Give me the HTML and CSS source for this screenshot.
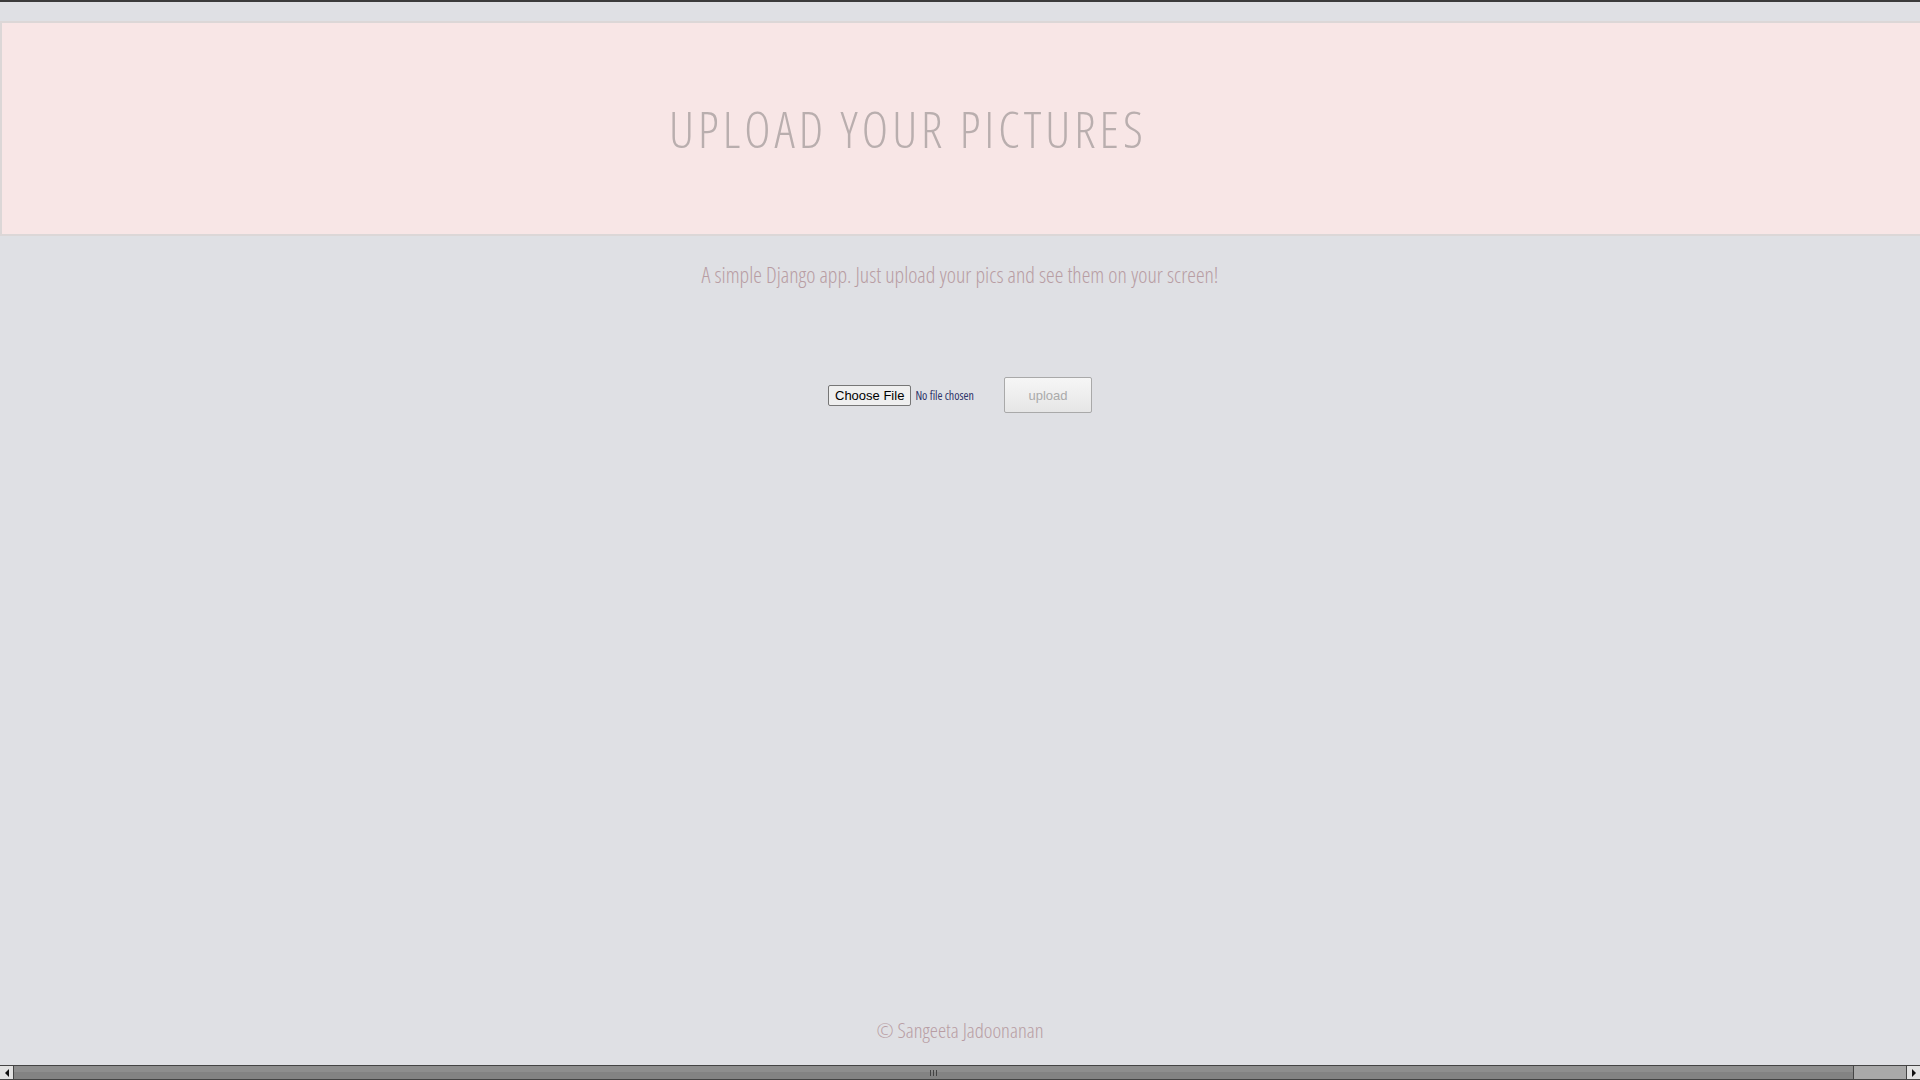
FILE: index.html
```html
<!DOCTYPE html>
<html lang="en">
<head>
<meta charset="utf-8">
<title>Upload your pictures</title>
<link rel="stylesheet" href="styles.css">
</head>
<body>
<div class="topline"></div>
<header class="banner">
  <h1 class="title">UPLOAD YOUR PICTURES</h1>
</header>
<main class="main">
  <p class="lead">A simple Django app. Just upload your pics and see them on your screen!</p>
  <form class="upload-form">
    <input class="file-input" type="file" name="pic">
    <button class="upload-btn" type="button">upload</button>
  </form>
</main>
<footer class="footer">© Sangeeta Jadoonanan</footer>
<div class="hscroll">
  <div class="sb-btn sb-left"><span class="tri-left"></span></div>
  <div class="sb-thumb"><span class="grip"></span><span class="grip"></span><span class="grip"></span></div>
  <div class="sb-track"></div>
  <div class="sb-btn sb-right"><span class="tri-right"></span></div>
</div>
</body>
</html>
```
FILE: styles.css
```css
html, body {
  margin: 0;
  padding: 0;
}
body {
  background: #dfe0e4;
  height: 1080px;
  overflow: hidden;
  display: flex;
  flex-direction: column;
  font-family: "Open Sans", "DejaVu Sans", sans-serif;
  font-weight: 300;
  font-stretch: 75%;
}
.topline {
  height: 2px;
  background: #3b3b3b;
}
.banner {
  margin-top: 19px;
  height: 211px;
  background: #f8e6e6;
  border: 2px solid #dcd7d7;
  border-right: none;
  display: flex;
  align-items: center;
  justify-content: center;
}
.title {
  margin: 0;
  padding-right: 106px;
  font-family: "Open Sans", sans-serif;
  font-weight: 300;
  font-stretch: 87.5%;
  font-size: 50px;
  letter-spacing: 4px;
  color: #b9aeae;
}
.main {
  flex: 1;
  display: flex;
  flex-direction: column;
  align-items: center;
}
.lead {
  margin: 24px 0 0;
  font-size: 21.9px;
  color: #b89da3;
}
.upload-form {
  margin-top: 88px;
  display: flex;
  align-items: center;
  gap: 26px;
}
.file-input {
  width: 150px;
  font-family: "Open Sans", sans-serif;
  font-weight: 400;
  font-stretch: 75%;
  font-size: 12px;
  color: #2e3468;
}
.file-input::file-selector-button {
  font-family: "Liberation Sans", Arial, sans-serif;
  font-stretch: 100%;
  font-size: 13px;
  color: #000;
  background: #efefef;
  border: 1px solid #767676;
  border-radius: 2px;
  padding: 2px 6px;
  margin-right: 4px;
  height: 21px;
}
.upload-btn {
  width: 88px;
  height: 36px;
  font-family: "Liberation Sans", Arial, sans-serif;
  font-size: 13px;
  color: #aaa;
  background: linear-gradient(#f6f6f6, #e6e6e6);
  border: 1px solid #a9a9a9;
  border-radius: 2px;
}
.footer {
  text-align: center;
  font-size: 20.7px;
  color: #b89da3;
  padding-bottom: 36px;
}
.hscroll {
  position: fixed;
  left: 0;
  right: 0;
  bottom: 0;
  height: 13px;
  border-top: 1px solid #444;
  border-bottom: 1px solid #444;
  display: flex;
  background: #888;
}
.sb-btn {
  width: 13px;
  background: #e2e2e2;
  display: flex;
  align-items: center;
  justify-content: center;
}
.sb-left { border-right: 1px solid #444; }
.sb-right { border-left: 1px solid #444; }
.tri-left {
  width: 0; height: 0;
  border-top: 4px solid transparent;
  border-bottom: 4px solid transparent;
  border-right: 4px solid #111;
}
.tri-right {
  width: 0; height: 0;
  border-top: 4px solid transparent;
  border-bottom: 4px solid transparent;
  border-left: 4px solid #111;
}
.sb-thumb {
  width: 1839px;
  background: linear-gradient(#8e8e8e 50%, #838383 50%);
  border-right: 1px solid #444;
  display: flex;
  align-items: center;
  justify-content: center;
  gap: 2px;
}
.grip {
  width: 1px;
  height: 6px;
  background: #444;
}
.sb-track {
  flex: 1;
  background: #a9a9a9;
}
```
